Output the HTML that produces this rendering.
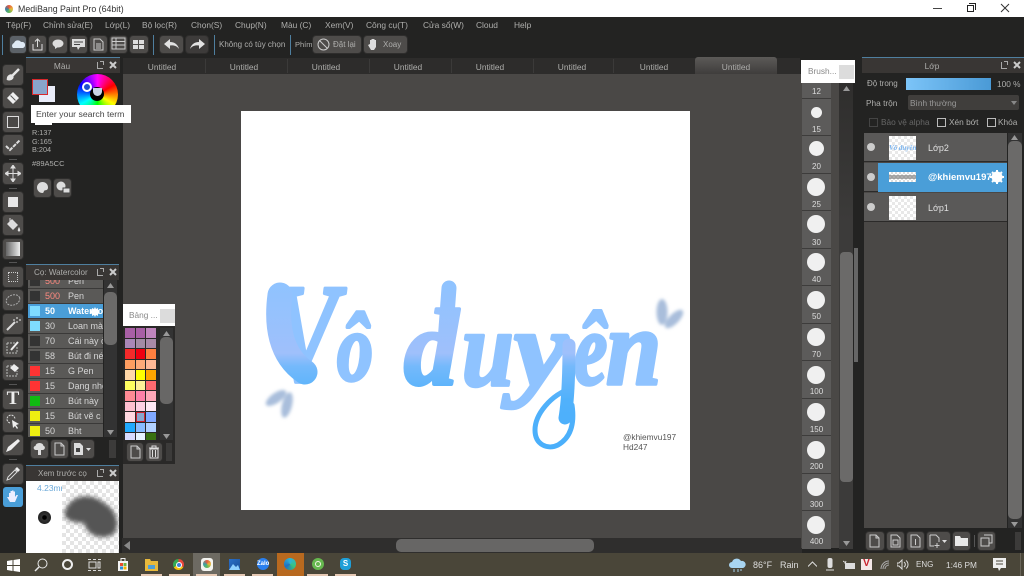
<!DOCTYPE html>
<html><head><meta charset="utf-8"><style>
*{box-sizing:border-box}
html,body{margin:0;padding:0;width:1024px;height:576px;overflow:hidden;background:#232322;font-family:"Liberation Sans","Noto Sans CJK SC",sans-serif}
#r{position:relative;width:1024px;height:576px;overflow:hidden}
#r div,#r span.a,#r svg{position:absolute}
.t{position:absolute;white-space:nowrap;color:#aeaeac;font-size:8.300px;line-height:12px}
.m{top:19px;font-size:8.400px}
.u{top:61px;width:80px;text-align:center;font-size:8.400px}
.b{background:#4e4c4a;border-radius:3px;box-shadow:0 0 0 1px #2e2d2c}
.h{background:#393634;border-top:1px solid #4f7f9f}
.sw{width:9.500px;height:9.500px}
.row{left:28px;width:75px;height:15px;background:#5a5957;border-bottom:1px solid #3a3938}
.chip{left:2px;top:2px;width:10px;height:10px;background:#3a3938}
.n{color:#d5d5d5;font-size:9px}
.c{border-radius:50%;background:#f0f0f0}
.l{color:#ddd;font-size:8px;left:0;width:29px;text-align:center}
</style></head><body><div id="r">
<!-- title bar -->
<div style="left:0;top:0;width:1024px;height:17px;background:#fff"></div>
<div style="left:5px;top:5px;width:8px;height:8px;border-radius:50%;background:conic-gradient(#e8583c,#e8b93c,#5cb85c,#3c7ea8,#e8583c)"></div>
<span class="t" style="left:18px;top:3px;color:#333;font-size:8.800px">MediBang Paint Pro (64bit)</span>
<div style="left:933px;top:8px;width:9px;height:1px;background:#444"></div>
<div style="left:967px;top:5px;width:7px;height:7px;border:1px solid #222;background:#fff"></div>
<div style="left:969px;top:3px;width:7px;height:7px;border:1px solid #222;border-left:0;border-bottom:0"></div>
<svg style="left:1000px;top:3px" width="10" height="10"><path d="M1 1L9 9M9 1L1 9" stroke="#333" fill="none"/></svg>
<!-- menu -->
<span class="t m" style="left:6px">Tệp(F)</span>
<span class="t m" style="left:43px">Chỉnh sửa(E)</span>
<span class="t m" style="left:105px">Lớp(L)</span>
<span class="t m" style="left:142px">Bộ lọc(R)</span>
<span class="t m" style="left:191px">Chọn(S)</span>
<span class="t m" style="left:235px">Chụp(N)</span>
<span class="t m" style="left:281px">Màu (C)</span>
<span class="t m" style="left:325px">Xem(V)</span>
<span class="t m" style="left:366px">Công cụ(T)</span>
<span class="t m" style="left:423px">Cửa sổ(W)</span>
<span class="t m" style="left:476px">Cloud</span>
<span class="t m" style="left:514px">Help</span>
<!-- toolbar -->
<div style="left:2px;top:35px;width:1px;height:20px;background:#4f7f9f"></div>
<div class="b" style="left:10px;top:36px;width:16px;height:17px;background:#5c6268"></div>
<svg style="left:11px;top:39px" width="14" height="11"><path d="M2 9a3 3 0 0 1 1-5a4 4 0 0 1 7-1a3 3 0 0 1 2 6z" fill="#dfeaf5"/></svg>
<div class="b" style="left:29px;top:36px;width:17px;height:17px"></div>
<svg style="left:31px;top:38px" width="13" height="13"><path d="M2 6v6h9V6M6.500 9V1M4 3.500L6.500 1L9 3.500" stroke="#ddd" fill="none"/></svg>
<div class="b" style="left:49px;top:36px;width:18px;height:17px"></div>
<svg style="left:52px;top:39px" width="12" height="11"><ellipse cx="6" cy="4.500" rx="5.500" ry="4" fill="#ddd"/><path d="M3 7L3 10L6 8z" fill="#ddd"/></svg>
<div class="b" style="left:70px;top:36px;width:17px;height:17px"></div>
<svg style="left:72px;top:39px" width="13" height="11"><path d="M0 0h13v8H8L6 11L5 8H0z" fill="#ddd"/><path d="M2 3h9M2 5.500h6" stroke="#444"/></svg>
<div class="b" style="left:90px;top:36px;width:17px;height:17px"></div>
<svg style="left:93px;top:38px" width="11" height="13"><path d="M1 1h6l3 3v8H1zM3 6h5M3 8h5M3 10h5" stroke="#ccc" fill="none"/></svg>
<div class="b" style="left:110px;top:36px;width:17px;height:17px"></div>
<svg style="left:111px;top:37px" width="15" height="15"><path d="M1 1h13v11H1zM1 4.500h13M1 8h13M5 1v11" stroke="#ccc" fill="none"/></svg>
<div class="b" style="left:130px;top:36px;width:18px;height:17px"></div>
<svg style="left:133px;top:39px" width="13" height="11"><path d="M0 1h5v4H0zM6 1h5v4H6zM0 6h5v4H0zM6 6h5v4H6z" fill="#ddd"/></svg>
<div style="left:153px;top:35px;width:1px;height:20px;background:#4f7f9f"></div>
<div class="b" style="left:160px;top:36px;width:23px;height:17px"></div>
<svg style="left:164px;top:39px" width="15" height="11"><path d="M0 5L6 0v3c5 0 8 3 9 7c-2-3-5-4-9-3.500V10z" fill="#e2e2e2"/></svg>
<div class="b" style="left:186px;top:36px;width:22px;height:17px;background:#3d3b3a"></div>
<svg style="left:190px;top:39px" width="15" height="11"><path d="M15 5L9 0v3C4 3 1 6 0 10c2-3 5-4 9-3.500V10z" fill="#e2e2e2"/></svg>
<div style="left:214px;top:35px;width:1px;height:20px;background:#4f7f9f"></div>
<span class="t" style="left:219px;top:39px;font-size:8px">Không có tùy chọn</span>
<div style="left:290px;top:35px;width:1px;height:20px;background:#4f7f9f"></div>
<span class="t" style="left:295px;top:39px;font-size:7.500px">Phím</span>
<div class="b" style="left:313px;top:36px;width:48px;height:17px"></div>
<svg style="left:317px;top:38px" width="13" height="13"><circle cx="6.500" cy="6.500" r="5.500" stroke="#ccc" fill="none"/><path d="M2.500 2.500l8 8" stroke="#ccc"/></svg>
<span class="t" style="left:333px;top:39px;font-size:8px">Đặt lại</span>
<div class="b" style="left:364px;top:36px;width:43px;height:17px"></div>
<svg style="left:367px;top:37px" width="13" height="15"><path d="M3 7V3h1.500v3V2H6v4V2h1.500v4V3H9v7l-2 3H4L1 8z" fill="#ddd"/></svg>
<span class="t" style="left:383px;top:39px;font-size:8px">Xoay</span>

<!-- tabs -->
<div style="left:123px;top:58px;width:677px;height:16px;background:#2d2c2b"></div>
<div style="left:205px;top:59px;width:1px;height:14px;background:#3b3a39"></div>
<div style="left:287px;top:59px;width:1px;height:14px;background:#3b3a39"></div>
<div style="left:369px;top:59px;width:1px;height:14px;background:#3b3a39"></div>
<div style="left:451px;top:59px;width:1px;height:14px;background:#3b3a39"></div>
<div style="left:533px;top:59px;width:1px;height:14px;background:#3b3a39"></div>
<div style="left:613px;top:59px;width:1px;height:14px;background:#3b3a39"></div>
<div style="left:695px;top:57px;width:82px;height:17px;background:linear-gradient(#5c5a58,#3f3d3c);border-radius:3px 3px 0 0"></div>
<span class="t u" style="left:122px">Untitled</span>
<span class="t u" style="left:204px">Untitled</span>
<span class="t u" style="left:286px">Untitled</span>
<span class="t u" style="left:368px">Untitled</span>
<span class="t u" style="left:450px">Untitled</span>
<span class="t u" style="left:532px">Untitled</span>
<span class="t u" style="left:614px">Untitled</span>
<span class="t u" style="left:696px">Untitled</span>

<!-- canvas -->
<div style="left:123px;top:74px;width:678px;height:464px;background:#4a4846"></div>
<div style="left:241px;top:111px;width:449px;height:399px;background:#fff"></div>
<svg style="left:0;top:0" width="1024" height="576">
<defs>
<linearGradient id="g" gradientUnits="userSpaceOnUse" x1="0" y1="283" x2="0" y2="450">
<stop offset="0" stop-color="#8fc3ff"/><stop offset=".42" stop-color="#9fc0fb"/><stop offset=".5" stop-color="#74b9fb"/><stop offset=".7" stop-color="#50b1fb"/><stop offset="1" stop-color="#4aaffb"/>
</linearGradient>
<filter id="bl"><feGaussianBlur stdDeviation="1.500"/></filter>
</defs>
<g fill="url(#g)" stroke="url(#g)" stroke-width="3.500" stroke-linejoin="round" font-family="'Liberation Serif',serif" font-style="italic" font-weight="700">
<text transform="translate(268 380) scale(.76 1)" font-size="140">V</text>
<text transform="translate(337 380) scale(.75 1)" font-size="96">ô</text>
<text x="404" y="384" font-size="108">d</text>
<text transform="translate(462 385) scale(.86 1)" font-size="108">u</text>
<text transform="translate(514 385) scale(1.12 1)" font-size="108">y</text>
<text transform="translate(574 384) scale(.72 1)" font-size="104">ê</text>
<text transform="translate(606 384) scale(.92 1)" font-size="108">n</text>
</g>
<!-- brush flourishes of the painted artwork -->
<g fill="none" stroke="url(#g)" stroke-linecap="round">
<path d="M449 288L445 342" stroke-width="15"/>
<path d="M569 345C569 375 568 400 565 418" stroke-width="13"/>
<path d="M572 388C550 395 535 415 535 430C535 445 548 450 558 445C570 438 575 425 572 405" stroke-width="5"/>
<path d="M280 295C276 325 280 355 305 372" stroke-width="25"/>
</g>
<g filter="url(#bl)" fill="#a9bedb">
<ellipse cx="662" cy="312" rx="5.500" ry="13"/>
<ellipse cx="674" cy="319" rx="5" ry="12" transform="rotate(45 674 319)"/>
<ellipse cx="276" cy="398" rx="5" ry="12" transform="rotate(55 276 398)"/>
<ellipse cx="287" cy="405" rx="5" ry="13" transform="rotate(14 287 405)"/>
</g>
</svg>
<span class="t" style="left:623px;top:431px;color:#555">@khiemvu197</span>
<span class="t" style="left:623px;top:441px;color:#555">Hd247</span>
<!-- h scrollbar -->
<div style="left:122px;top:538px;width:680px;height:15px;background:#2f2e2d"></div>
<div style="left:396px;top:539px;width:198px;height:13px;background:#676665;border-radius:5px"></div>
<svg style="left:124px;top:541px" width="8" height="9"><path d="M6 0v9L0 4.500z" fill="#888"/></svg>

<!-- left tools -->
<div style="left:0;top:57px;width:26px;height:496px;background:#232322"></div>
<div class="b" style="left:3px;top:65px;width:20px;height:20px"></div>
<svg style="left:5px;top:67px" width="16" height="16"><path d="M14 2L7 9M3 12c0-3 3-4 4-3s0 4-4 3z" stroke="#e5e5e5" stroke-width="2.500" fill="#e5e5e5"/></svg>
<div class="b" style="left:3px;top:88px;width:20px;height:20px"></div>
<svg style="left:5px;top:90px" width="16" height="16"><path d="M8 2l6 6l-6 6l-6-6z" fill="#eee"/><path d="M5.500 5.500l5 5" stroke="#555"/></svg>
<div class="b" style="left:3px;top:112px;width:20px;height:20px"></div>
<div style="left:7px;top:116px;width:12px;height:12px;border:1.500px solid #ddd;background:#4a4846"></div>
<div class="b" style="left:3px;top:135px;width:20px;height:20px"></div>
<svg style="left:5px;top:137px" width="16" height="16"><path d="M1 9l4 4L15 3" stroke="#ddd" stroke-width="2" fill="none" stroke-dasharray="4 1"/></svg>
<div style="left:9px;top:159px;width:8px;height:1px;background:#555"></div>
<div class="b" style="left:3px;top:163px;width:20px;height:21px"></div>
<svg style="left:5px;top:165px" width="16" height="17"><path d="M8 1v15M1 8.500h14M8 0l-2 3h4zM8 17l-2-3h4zM0 8.500l3-2v4zM16 8.500l-3-2v4z" stroke="#ddd" fill="#ddd"/></svg>
<div style="left:9px;top:188px;width:8px;height:1px;background:#555"></div>
<div class="b" style="left:3px;top:192px;width:20px;height:20px"></div>
<div style="left:8px;top:197px;width:10px;height:10px;background:#e8e8e8"></div>
<div class="b" style="left:3px;top:215px;width:20px;height:20px"></div>
<svg style="left:5px;top:217px" width="16" height="16"><path d="M7 2l6 6l-5 5l-6-6z" fill="#ddd"/><path d="M5 1v6M14 11c1 2 1 3 0 3s-1-1 0-3z" stroke="#ddd" fill="#ddd"/></svg>
<div class="b" style="left:3px;top:239px;width:20px;height:20px"></div>
<div style="left:6px;top:242px;width:14px;height:14px;background:linear-gradient(90deg,#666,#eee)"></div>
<div style="left:9px;top:262px;width:8px;height:1px;background:#555"></div>
<div class="b" style="left:3px;top:267px;width:20px;height:20px"></div>
<div style="left:8px;top:272px;width:10px;height:10px;border:1px dotted #ccc"></div>
<div class="b" style="left:3px;top:290px;width:20px;height:20px"></div>
<svg style="left:5px;top:293px" width="16" height="14"><ellipse cx="8" cy="7" rx="7" ry="5" stroke="#aaa" fill="none" stroke-dasharray="2 1" transform="rotate(-20 8 7)"/></svg>
<div class="b" style="left:3px;top:314px;width:20px;height:20px"></div>
<svg style="left:5px;top:316px" width="16" height="16"><path d="M2 14l8-8" stroke="#ddd" stroke-width="2"/><path d="M12 1v2M12 5v2M8 4h2M14 4h2" stroke="#eee"/></svg>
<div class="b" style="left:3px;top:337px;width:20px;height:20px"></div>
<svg style="left:5px;top:339px" width="16" height="16"><path d="M2 4h9M2 4v10h10V8" stroke="#bbb" fill="none" stroke-dasharray="2 1"/><path d="M6 11l7-8" stroke="#eee" stroke-width="2"/></svg>
<div class="b" style="left:3px;top:360px;width:20px;height:20px"></div>
<svg style="left:5px;top:362px" width="16" height="16"><path d="M2 4h6M2 4v10h10V9" stroke="#bbb" fill="none" stroke-dasharray="2 1"/><path d="M9 2l5 4l-4 4l-5-4z" fill="#eee"/></svg>
<div style="left:9px;top:384px;width:8px;height:1px;background:#555"></div>
<div class="b" style="left:3px;top:389px;width:20px;height:20px"></div>
<span class="t" style="left:3px;top:389px;width:20px;height:20px;text-align:center;font:700 19px/20px 'Liberation Serif',serif;color:#eee">T</span>
<div class="b" style="left:3px;top:412px;width:20px;height:20px"></div>
<svg style="left:5px;top:414px" width="16" height="16"><path d="M5 9a4 4 0 1 1 5-4" stroke="#ddd" fill="none" stroke-dasharray="2 1"/><path d="M7 6l7 4l-3 1l2 3l-1 1l-2-3l-2 2z" fill="#eee"/></svg>
<div class="b" style="left:3px;top:435px;width:20px;height:20px"></div>
<svg style="left:5px;top:437px" width="16" height="16"><path d="M13 2l2 2l-9 9l-5 2l2-5z" fill="#eee"/></svg>
<div style="left:9px;top:459px;width:8px;height:1px;background:#555"></div>
<div class="b" style="left:3px;top:464px;width:20px;height:20px"></div>
<svg style="left:5px;top:466px" width="16" height="16"><path d="M2 14l1-3l7-7l2 2l-7 7z" stroke="#ddd" fill="none"/><path d="M10 3l2-2l3 3l-2 2z" fill="#eee"/></svg>
<div class="b" style="left:3px;top:487px;width:20px;height:20px;background:#4a9ed8;box-shadow:none"></div>
<svg style="left:5px;top:489px" width="16" height="16"><path d="M4 8V4h1.500v3V2H7v5V1.500h1.500V7V2.500H10V8l1.500-2h1.500l-3 7H5L2 8z" fill="#eef"/></svg>

<!-- colour panel -->
<div style="left:26px;top:57px;width:94px;height:208px;background:#232322"></div>
<div class="h" style="left:26px;top:57px;width:94px;height:16px"></div>
<span class="t" style="left:26px;top:60px;width:72px;text-align:center">Màu</span>
<div style="left:97px;top:62px;width:6px;height:7px;border:1px solid #aaa;border-top:0;border-right:0"></div>
<div style="left:100px;top:61px;width:4px;height:4px;border:1px solid #aaa;border-left:0;border-bottom:0"></div>
<svg style="left:109px;top:61px" width="8" height="8"><path d="M1 1l6 6M7 1L1 7" stroke="#ccc" stroke-width="2"/></svg>
<div style="left:39px;top:86px;width:16px;height:16px;background:#e9ecf9"></div>
<div style="left:32px;top:79px;width:16px;height:16px;background:#89A5CC;border:1.500px solid #d8282c"></div>
<div style="left:77px;top:74px;width:41px;height:41px;border-radius:50%;background:conic-gradient(#f0f,#f00,#ff0,#0f0,#0ff,#00f,#f0f)"></div>
<div style="left:90px;top:87px;width:14px;height:14px;border-radius:50%;background:#000"></div>
<div style="left:93px;top:88px;width:9px;height:8px;border-radius:0 0 5px 5px;background:#c8d4e6"></div>
<div style="left:82px;top:82px;width:10px;height:10px;border-radius:50%;background:#2050d0;border:2px solid #fff"></div>
<div style="left:35px;top:120px;width:17px;height:5px;background:#fff"></div>
<div style="left:31px;top:105px;width:100px;height:18px;background:#fff"></div>
<span class="t" style="left:36px;top:108px;color:#444;font-size:8.700px">Enter your search term</span>
<span class="t" style="left:32px;top:129px;font-size:7.300px;line-height:8.500px">R:137<br>G:165<br>B:204</span>
<span class="t" style="left:32px;top:158px;font-size:7.500px">#89A5CC</span>
<div class="b" style="left:34px;top:179px;width:17px;height:18px"></div>
<svg style="left:36px;top:181px" width="13" height="13"><path d="M6.500 1a5.500 5.500 0 1 0 0 11c1.500 0 1-2 2-2.500s3.500 0 3.500-3C12 3 9.500 1 6.500 1z" fill="#ddd"/></svg>
<div class="b" style="left:54px;top:179px;width:17px;height:18px"></div>
<svg style="left:56px;top:181px" width="14" height="13"><circle cx="5" cy="5" r="4.500" fill="#ddd"/><rect x="7" y="7" width="7" height="5" fill="#ddd" stroke="#444"/></svg>

<!-- brush panel -->
<div style="left:26px;top:264px;width:94px;height:199px;background:#232322"></div>
<div class="h" style="left:26px;top:264px;width:93px;height:16px"></div>
<span class="t" style="left:34px;top:267px;font-size:8.100px">Cọ: Watercolor</span>
<div style="left:97px;top:269px;width:6px;height:7px;border:1px solid #aaa;border-top:0;border-right:0"></div>
<div style="left:100px;top:268px;width:4px;height:4px;border:1px solid #aaa;border-left:0;border-bottom:0"></div>
<svg style="left:109px;top:268px" width="8" height="8"><path d="M1 1l6 6M7 1L1 7" stroke="#ccc" stroke-width="2"/></svg>
<div style="left:28px;top:280px;width:75px;height:157px;overflow:hidden;background:#5a5957">
<div class="row" style="left:0;top:-6px"><div class="chip" style="background:#333;left:2px"></div><span class="t n" style="left:17px;top:1px;color:#ff8a80">500</span><span class="t n" style="left:40px;top:1px">Pen</span></div>
<div class="row" style="left:0;top:9px"><div class="chip" style="background:#333"></div><span class="t n" style="left:17px;top:1px;color:#ff8a80">500</span><span class="t n" style="left:40px;top:1px">Pen</span></div>
<div class="row" style="left:0;top:24px;background:#4a9ed8"><div class="chip" style="background:#7fdcff"></div><span class="t n" style="left:17px;top:1px;color:#fff;font-weight:700">50</span><span class="t n" style="left:40px;top:1px;color:#fff;font-weight:700">Watercolor</span></div>
<div class="row" style="left:0;top:39px"><div class="chip" style="background:#7fdcff"></div><span class="t n" style="left:17px;top:1px">30</span><span class="t n" style="left:40px;top:1px">Loan màu</span></div>
<div class="row" style="left:0;top:54px"><div class="chip" style="background:#333"></div><span class="t n" style="left:17px;top:1px">70</span><span class="t n" style="left:40px;top:1px">Cái này ở</span></div>
<div class="row" style="left:0;top:69px"><div class="chip" style="background:#333"></div><span class="t n" style="left:17px;top:1px">58</span><span class="t n" style="left:40px;top:1px">Bút đi nét</span></div>
<div class="row" style="left:0;top:84px"><div class="chip" style="background:#f33"></div><span class="t n" style="left:17px;top:1px">15</span><span class="t n" style="left:40px;top:1px">G Pen</span></div>
<div class="row" style="left:0;top:99px"><div class="chip" style="background:#f33"></div><span class="t n" style="left:17px;top:1px">15</span><span class="t n" style="left:40px;top:1px">Dạng nhỏ</span></div>
<div class="row" style="left:0;top:114px"><div class="chip" style="background:#1b1"></div><span class="t n" style="left:17px;top:1px">10</span><span class="t n" style="left:40px;top:1px">Bút này</span></div>
<div class="row" style="left:0;top:129px"><div class="chip" style="background:#ee1"></div><span class="t n" style="left:17px;top:1px">15</span><span class="t n" style="left:40px;top:1px">Bút vẽ c</span></div>
<div class="row" style="left:0;top:144px"><div class="chip" style="background:#ee1"></div><span class="t n" style="left:17px;top:1px">50</span><span class="t n" style="left:40px;top:1px">Bht</span></div>
</div>
<svg style="left:90px;top:307px" width="10" height="10"><path d="M5 0l1 2l2-1l0 2l2 1l-1 1l1 1l-2 1l0 2l-2-1l-1 2l-1-2l-2 1l0-2l-2-1l1-1l-1-1l2-1l0-2l2 1z" fill="#fff"/></svg>
<div style="left:104px;top:280px;width:13px;height:157px;background:#333"></div>
<div style="left:104px;top:292px;width:13px;height:53px;background:#6b6a69;border-radius:5px"></div>
<svg style="left:107px;top:283px" width="7" height="5"><path d="M3.500 0L7 5H0z" fill="#999"/></svg>
<svg style="left:107px;top:430px" width="7" height="5"><path d="M3.500 5L7 0H0z" fill="#999"/></svg>
<div class="b" style="left:31px;top:440px;width:17px;height:18px"></div>
<svg style="left:33px;top:442px" width="13" height="14"><path d="M6.500 1c3 0 4 2 4 3c2 0 2 4-1 4H8v5H5V8H3C0 8 0 4 2.500 4c0-1 1-3 4-3z" fill="#ddd"/></svg>
<div class="b" style="left:51px;top:440px;width:17px;height:18px"></div>
<svg style="left:54px;top:442px" width="11" height="14"><path d="M1 1h6l3 3v9H1zM7 1v3h3" stroke="#ccc" fill="none"/></svg>
<div class="b" style="left:71px;top:440px;width:23px;height:18px"></div>
<svg style="left:73px;top:442px" width="19" height="14"><path d="M1 1h6l3 3v9H1z" fill="#ddd"/><rect x="3" y="6" width="4" height="4" fill="#444"/><path d="M13 6h5l-2.500 3z" fill="#ddd"/></svg>
<div style="left:109px;top:440px;width:7px;height:18px;background:#3c3b3a"></div>

<!-- preview panel -->
<div class="h" style="left:26px;top:465px;width:93px;height:16px"></div>
<span class="t" style="left:38px;top:468px;font-size:8px">Xem trước cọ</span>
<div style="left:97px;top:470px;width:6px;height:7px;border:1px solid #aaa;border-top:0;border-right:0"></div>
<div style="left:100px;top:469px;width:4px;height:4px;border:1px solid #aaa;border-left:0;border-bottom:0"></div>
<svg style="left:109px;top:469px" width="8" height="8"><path d="M1 1l6 6M7 1L1 7" stroke="#ccc" stroke-width="2"/></svg>
<div style="left:26px;top:481px;width:93px;height:72px;background:#fff"></div>
<div style="left:62px;top:481px;width:57px;height:72px;background:repeating-conic-gradient(#e4e4e4 0 25%,#fff 0 50%) 0 0/8px 8px"></div>
<span class="t" style="left:37px;top:482px;color:#6aa8d8;font-size:8.500px;width:25px;overflow:hidden">4.23mm</span>
<div style="left:38px;top:511px;width:13px;height:13px;border-radius:50%;background:radial-gradient(#000 20%,#333 30%,#222 70%,#666)"></div>
<svg style="left:62px;top:481px" width="57" height="72"><defs><filter id="b2"><feGaussianBlur stdDeviation="2.500"/></filter></defs><path d="M3 30C10 12 30 12 42 22C56 30 58 45 52 53C40 60 25 55 22 42C10 42 0 38 3 30z" fill="#555" filter="url(#b2)"/></svg>

<!-- palette panel -->
<div style="left:123px;top:304px;width:52px;height:160px;background:#2a2928"></div>
<div style="left:123px;top:304px;width:52px;height:22px;background:#fff"></div>
<span class="t" style="left:129px;top:309px;color:#888">Bảng ...</span>
<div style="left:160px;top:309px;width:15px;height:14px;background:#dcdcdc"></div>
<div class="sw" style="left:125px;top:328px;background:#a85fa5"></div><div class="sw" style="left:135.500px;top:328px;background:#a85fa5"></div><div class="sw" style="left:146px;top:328px;background:#c085bd"></div>
<div class="sw" style="left:125px;top:338.500px;background:#a987b8"></div><div class="sw" style="left:135.500px;top:338.500px;background:#a38ba5"></div><div class="sw" style="left:146px;top:338.500px;background:#a98aa8"></div>
<div class="sw" style="left:125px;top:349px;background:#f52a2a"></div><div class="sw" style="left:135.500px;top:349px;background:#f00010"></div><div class="sw" style="left:146px;top:349px;background:#ff8040"></div>
<div class="sw" style="left:125px;top:359.500px;background:#ff9e60"></div><div class="sw" style="left:135.500px;top:359.500px;background:#ffaa78"></div><div class="sw" style="left:146px;top:359.500px;background:#ffb896"></div>
<div class="sw" style="left:125px;top:370px;background:#ffd8a8"></div><div class="sw" style="left:135.500px;top:370px;background:#ffff00"></div><div class="sw" style="left:146px;top:370px;background:#ffa500"></div>
<div class="sw" style="left:125px;top:380.500px;background:#ffff60"></div><div class="sw" style="left:135.500px;top:380.500px;background:#fff098"></div><div class="sw" style="left:146px;top:380.500px;background:#ff6a70"></div>
<div class="sw" style="left:125px;top:391px;background:#ff8a94"></div><div class="sw" style="left:135.500px;top:391px;background:#ff80a8"></div><div class="sw" style="left:146px;top:391px;background:#ffa8b8"></div>
<div class="sw" style="left:125px;top:401.500px;background:#ffc0d0"></div><div class="sw" style="left:135.500px;top:401.500px;background:#ffd0e4"></div><div class="sw" style="left:146px;top:401.500px;background:#ffe8f4"></div>
<div class="sw" style="left:125px;top:412px;background:#ffd8e0"></div><div class="sw" style="left:135.500px;top:412px;background:#89A5CC;border:1px solid #d02030"></div><div class="sw" style="left:146px;top:412px;background:#80a8ff"></div>
<div class="sw" style="left:125px;top:422.500px;background:#20aaff"></div><div class="sw" style="left:135.500px;top:422.500px;background:#88bcff"></div><div class="sw" style="left:146px;top:422.500px;background:#b0d0ff"></div>
<div class="sw" style="left:125px;top:433px;background:#d8dcff;height:7px"></div><div class="sw" style="left:135.500px;top:433px;background:#e8f4ff;height:7px"></div><div class="sw" style="left:146px;top:433px;background:#387010;height:7px"></div>
<div style="left:160px;top:328px;width:13px;height:112px;background:#333"></div>
<div style="left:160px;top:337px;width:13px;height:67px;background:#686766;border-radius:5px"></div>
<svg style="left:163px;top:331px" width="7" height="5"><path d="M3.500 0L7 5H0z" fill="#999"/></svg>
<svg style="left:163px;top:434px" width="7" height="5"><path d="M3.500 5L7 0H0z" fill="#999"/></svg>
<div class="b" style="left:127px;top:443px;width:16px;height:18px"></div>
<svg style="left:130px;top:445px" width="11" height="14"><path d="M1 1h6l3 3v9H1zM7 1v3h3" stroke="#ccc" fill="none"/></svg>
<div class="b" style="left:146px;top:443px;width:16px;height:18px"></div>
<svg style="left:148px;top:445px" width="12" height="14"><path d="M1 3h10M4 3V1h4v2M2 4h8v9H2zM4.500 5v7M7.500 5v7" stroke="#ddd" fill="none"/></svg>
<div style="left:166px;top:443px;width:6px;height:18px;background:#3c3b3a"></div>

<!-- brush size panel -->
<div style="left:801px;top:74px;width:38px;height:474px;background:#4a4846"></div>
<div style="left:801px;top:60px;width:54px;height:23px;background:#fff"></div>
<span class="t" style="left:808px;top:65px;color:#888">Brush...</span>
<div style="left:839px;top:65px;width:15px;height:14px;background:#dcdcdc"></div>
<div style="left:802px;top:83px;width:29px;height:466px;background:#5c5b5a"></div>
<div style="left:839px;top:83px;width:14px;height:466px;background:linear-gradient(#2f2e2d,#3c3b3a 30%,#3c3b3a)"></div>
<div style="left:840px;top:252px;width:13px;height:230px;background:#6b6a69;border-radius:4px"></div>
<div style="left:854px;top:248px;width:4px;height:114px;background:#666"></div>
<svg style="left:843px;top:86px" width="7" height="5"><path d="M3.500 0L7 5H0z" fill="#999"/></svg>
<svg style="left:843px;top:541px" width="7" height="5"><path d="M3.500 5L7 0H0z" fill="#999"/></svg>
<div style="left:802px;top:98px;width:29px;height:1px;background:#3d3c3b"></div>
<span class="t l" style="left:802px;top:86px">12</span>
<div class="c" style="left:811px;top:107px;width:11px;height:11px"></div><span class="t l" style="left:802px;top:124px">15</span>
<div style="left:802px;top:135px;width:29px;height:1px;background:#3d3c3b"></div>
<div class="c" style="left:809px;top:141px;width:15px;height:15px"></div><span class="t l" style="left:802px;top:161px">20</span>
<div style="left:802px;top:173px;width:29px;height:1px;background:#3d3c3b"></div>
<div class="c" style="left:807px;top:178px;width:18px;height:18px"></div><span class="t l" style="left:802px;top:199px">25</span>
<div style="left:802px;top:210px;width:29px;height:1px;background:#3d3c3b"></div>
<div class="c" style="left:807px;top:215px;width:18px;height:18px"></div><span class="t l" style="left:802px;top:237px">30</span>
<div style="left:802px;top:248px;width:29px;height:1px;background:#3d3c3b"></div>
<div class="c" style="left:807px;top:253px;width:18px;height:18px"></div><span class="t l" style="left:802px;top:274px">40</span>
<div style="left:802px;top:285px;width:29px;height:1px;background:#3d3c3b"></div>
<div class="c" style="left:807px;top:291px;width:18px;height:18px"></div><span class="t l" style="left:802px;top:311px">50</span>
<div style="left:802px;top:323px;width:29px;height:1px;background:#3d3c3b"></div>
<div class="c" style="left:807px;top:328px;width:18px;height:18px"></div><span class="t l" style="left:802px;top:349px">70</span>
<div style="left:802px;top:360px;width:29px;height:1px;background:#3d3c3b"></div>
<div class="c" style="left:807px;top:366px;width:18px;height:18px"></div><span class="t l" style="left:802px;top:386px">100</span>
<div style="left:802px;top:398px;width:29px;height:1px;background:#3d3c3b"></div>
<div class="c" style="left:807px;top:403px;width:18px;height:18px"></div><span class="t l" style="left:802px;top:424px">150</span>
<div style="left:802px;top:435px;width:29px;height:1px;background:#3d3c3b"></div>
<div class="c" style="left:807px;top:441px;width:18px;height:18px"></div><span class="t l" style="left:802px;top:461px">200</span>
<div style="left:802px;top:473px;width:29px;height:1px;background:#3d3c3b"></div>
<div class="c" style="left:807px;top:478px;width:18px;height:18px"></div><span class="t l" style="left:802px;top:499px">300</span>
<div style="left:802px;top:510px;width:29px;height:1px;background:#3d3c3b"></div>
<div class="c" style="left:807px;top:516px;width:18px;height:18px"></div><span class="t l" style="left:802px;top:536px">400</span>

<!-- layer panel -->
<div style="left:862px;top:57px;width:162px;height:496px;background:#232322"></div>
<div class="h" style="left:862px;top:57px;width:162px;height:16px"></div>
<span class="t" style="left:862px;top:60px;width:140px;text-align:center">Lớp</span>
<div style="left:1001px;top:62px;width:6px;height:7px;border:1px solid #aaa;border-top:0;border-right:0"></div>
<div style="left:1004px;top:61px;width:4px;height:4px;border:1px solid #aaa;border-left:0;border-bottom:0"></div>
<svg style="left:1013px;top:61px" width="8" height="8"><path d="M1 1l6 6M7 1L1 7" stroke="#ccc" stroke-width="2"/></svg>
<span class="t" style="left:867px;top:78px;font-size:8px">Độ trong</span>
<div style="left:906px;top:78px;width:85px;height:12px;background:linear-gradient(90deg,#7cc4f8,#4a9ad6)"></div>
<span class="t" style="left:997px;top:78px">100 %</span>
<span class="t" style="left:866px;top:97px">Pha trộn</span>
<div style="left:908px;top:95px;width:111px;height:15px;background:#403e3c;border-radius:2px"></div>
<span class="t" style="left:910px;top:97px;color:#999">Bình thường</span>
<svg style="left:1011px;top:101px" width="6" height="4"><path d="M0 0h6L3 4z" fill="#888"/></svg>
<div style="left:869px;top:118px;width:9px;height:9px;border:1px solid #444"></div>
<span class="t" style="left:881px;top:116px;color:#666">Bảo vệ alpha</span>
<div style="left:937px;top:118px;width:9px;height:9px;border:1px solid #bbb"></div>
<span class="t" style="left:949px;top:116px">Xén bớt</span>
<div style="left:987px;top:118px;width:9px;height:9px;border:1px solid #bbb"></div>
<span class="t" style="left:998px;top:116px">Khóa</span>
<div style="left:864px;top:133px;width:143px;height:395px;background:#4a4846"></div>
<div style="left:864px;top:133px;width:143px;height:29px;background:#5a5958;border-bottom:1px solid #2b2a29"></div>
<div style="left:864px;top:163px;width:143px;height:29px;background:#5a5958;border-bottom:1px solid #2b2a29"></div>
<div style="left:878px;top:163px;width:129px;height:29px;background:#4a9ed8"></div>
<div style="left:864px;top:193px;width:143px;height:29px;background:#5a5958;border-bottom:1px solid #2b2a29"></div>
<div class="c" style="left:867px;top:143px;width:8px;height:8px;background:#ccc"></div>
<div class="c" style="left:867px;top:173px;width:8px;height:8px;background:#ccc"></div>
<div class="c" style="left:867px;top:203px;width:8px;height:8px;background:#ccc"></div>
<div style="left:889px;top:136px;width:27px;height:24px;background:repeating-conic-gradient(#e8e8e8 0 25%,#fff 0 50%) 0 0/6px 6px"></div>
<span class="t" style="left:889px;top:142px;width:27px;text-align:center;color:#7ab4f0;font:italic 700 7px/12px 'Liberation Serif',serif">Vô duyên</span>
<div style="left:889px;top:172px;width:27px;height:10px;background:repeating-conic-gradient(#ddd 0 25%,#fff 0 50%) 0 0/4px 4px"></div>
<div style="left:889px;top:175px;width:27px;height:4px;background:#777;opacity:.6"></div>
<div style="left:889px;top:196px;width:27px;height:24px;background:repeating-conic-gradient(#e8e8e8 0 25%,#fff 0 50%) 0 0/6px 6px"></div>
<span class="t" style="left:928px;top:142px;color:#e0e0e0;font-size:9px">Lớp2</span>
<span class="t" style="left:928px;top:172px;color:#fff;font-size:9.500px;font-weight:700;width:70px;overflow:hidden">@khiemvu197</span>
<span class="t" style="left:928px;top:202px;color:#e0e0e0;font-size:9px">Lớp1</span>
<svg style="left:990px;top:170px" width="14" height="14"><circle cx="7" cy="7" r="4" fill="none" stroke="#fff" stroke-width="3"/><path d="M7 0v14M0 7h14M2 2l10 10M12 2L2 12" stroke="#fff" stroke-width="2"/></svg>
<div style="left:1008px;top:133px;width:14px;height:395px;background:#333"></div>
<div style="left:1008px;top:141px;width:14px;height:378px;background:#6b6a69;border-radius:5px"></div>
<svg style="left:1011px;top:135px" width="7" height="5"><path d="M3.500 0L7 5H0z" fill="#999"/></svg>
<svg style="left:1011px;top:522px" width="7" height="5"><path d="M3.500 5L7 0H0z" fill="#999"/></svg>
<div class="b" style="left:866px;top:532px;width:18px;height:18px"></div>
<svg style="left:869px;top:534px" width="11" height="14"><path d="M1 1h6l3 3v9H1zM7 1v3h3" stroke="#ccc" fill="none"/></svg>
<div class="b" style="left:887px;top:532px;width:17px;height:18px"></div>
<svg style="left:889px;top:534px" width="12" height="14"><path d="M2 1h6l3 3v9H2zM4 6h5v5H4z" stroke="#ccc" fill="none"/></svg>
<div class="b" style="left:907px;top:532px;width:17px;height:18px"></div>
<svg style="left:909px;top:534px" width="12" height="14"><path d="M2 1h6l3 3v9H2zM6.500 5v6" stroke="#ccc" fill="none"/></svg>
<div class="b" style="left:927px;top:532px;width:23px;height:18px"></div>
<svg style="left:929px;top:534px" width="20" height="14"><path d="M1 1h6l3 3v4M1 1v11h4M8 9v5M5.500 11.500h5" stroke="#ccc" fill="none"/><path d="M13 6h5l-2.500 3z" fill="#ddd"/></svg>
<div class="b" style="left:953px;top:532px;width:17px;height:18px"></div>
<svg style="left:955px;top:535px" width="13" height="11"><path d="M0 1h5l1 2h7v8H0z" fill="#e8e8e8"/></svg>
<div style="left:974px;top:535px;width:1px;height:12px;background:#555"></div>
<div class="b" style="left:978px;top:532px;width:17px;height:18px"></div>
<svg style="left:980px;top:534px" width="13" height="13"><path d="M4 1h8v8H9M1 4h8v8H1z" stroke="#ccc" fill="none"/></svg>
<div style="left:1015px;top:532px;width:6px;height:18px;background:#3c3b3a"></div>

<!-- taskbar -->
<div style="left:0;top:553px;width:1024px;height:23px;background:#4a4639"></div>
<div style="left:193px;top:553px;width:27px;height:23px;background:#6d6a62"></div>
<div style="left:277px;top:553px;width:27px;height:23px;background:#b8691f"></div>
<div style="left:141px;top:574px;width:21px;height:2px;background:#e6c9b4"></div>
<div style="left:169px;top:574px;width:21px;height:2px;background:#e6c9b4"></div>
<div style="left:196px;top:574px;width:21px;height:2px;background:#e6c9b4"></div>
<div style="left:224px;top:574px;width:21px;height:2px;background:#e6c9b4"></div>
<div style="left:252px;top:574px;width:21px;height:2px;background:#e6c9b4"></div>
<div style="left:307px;top:574px;width:21px;height:2px;background:#e6c9b4"></div>
<div style="left:335px;top:574px;width:21px;height:2px;background:#e6c9b4"></div>
<svg style="left:7px;top:559px" width="13" height="13"><path d="M0 2l5.500-1v5H0zM6.500 1L13 0v6H6.500zM0 7h5.500v5L0 11zM6.500 7H13v6l-6.500-1z" fill="#fff"/></svg>
<svg style="left:34px;top:558px" width="14" height="14"><circle cx="8.500" cy="5.500" r="4.500" stroke="#e8e8e8" fill="none"/><path d="M5 9L1 13" stroke="#e8e8e8" stroke-width="1.500"/></svg>
<div style="left:62px;top:559px;width:11px;height:11px;border:2px solid #eee;border-radius:50%"></div>
<svg style="left:88px;top:559px" width="13" height="12"><path d="M0 .5h3M5 .5h3M10 .5h3M0 11.500h3M5 11.500h3M10 11.500h3M1 3h7v6H1zM10 3h2v6h-2z" stroke="#ddd" fill="none"/></svg>
<svg style="left:117px;top:557px" width="12" height="15"><path d="M1 4h10v10H1z" fill="#f4f4f4"/><path d="M4 4V1.500h4V4" stroke="#eee" fill="none"/><rect x="3" y="6" width="3" height="3" fill="#e84c2c"/><rect x="6.500" y="6" width="3" height="3" fill="#6db33f"/><rect x="3" y="9.500" width="3" height="3" fill="#2a8fd8"/><rect x="6.500" y="9.500" width="3" height="3" fill="#f4b400"/></svg>
<svg style="left:145px;top:559px" width="13" height="12"><path d="M0 0h5l1 2h7v10H0z" fill="#e8b93c"/><rect x="3" y="6" width="7" height="4" fill="#4f9fd8"/></svg>
<div style="left:173px;top:559px;width:11px;height:11px;border-radius:50%;background:conic-gradient(#e8453c 0 33%,#f4c20d 0 66%,#34a853 0)"></div>
<div style="left:176.500px;top:562.500px;width:4px;height:4px;border-radius:50%;background:#3b82d8;box-shadow:0 0 0 1px #fff"></div>
<div style="left:201px;top:558px;width:12px;height:13px;border-radius:3px;background:#f4f4f0"></div>
<div style="left:203px;top:560px;width:8px;height:8px;border-radius:50%;background:conic-gradient(#e8583c,#e8b93c,#5cb85c,#3c9ea8,#e8583c)"></div>
<div style="left:229px;top:559px;width:11px;height:11px;background:linear-gradient(135deg,#2a6fc8,#1a4f98)"></div>
<svg style="left:229px;top:562px" width="11" height="8"><path d="M0 8l4-6l3 3l2-2l2 5z" fill="#8fd0ff"/></svg>
<div style="left:257px;top:558px;width:12px;height:12px;border-radius:50%;background:#2a80f0"></div>
<span class="t" style="left:257px;top:559px;width:12px;text-align:center;font-size:6px;line-height:10px;color:#fff;font-weight:700">Zalo</span>
<div style="left:284px;top:558px;width:12px;height:12px;border-radius:50%;background:conic-gradient(#2eb5d8,#3ac47d,#1d6fc0,#2eb5d8)"></div>
<div style="left:312px;top:558px;width:12px;height:12px;border-radius:50%;background:#66b84f"></div>
<div style="left:315px;top:561px;width:6px;height:6px;border-radius:50%;border:1.500px solid #f4f4e8"></div>
<div style="left:340px;top:558px;width:11px;height:12px;border-radius:4px;background:#1f9fd8"></div>
<span class="t" style="left:340px;top:558px;width:11px;text-align:center;font-size:8px;color:#fff;font-weight:700">S</span>
<svg style="left:729px;top:557px" width="17" height="16"><path d="M3 11a3 3 0 0 1 0-6a5 5 0 0 1 9-1a3.500 3.500 0 0 1 2 7z" fill="#a8d4f0"/><path d="M5 12v3M9 12v3M12 12v2" stroke="#a8d4f0"/></svg>
<span class="t" style="left:753px;top:559px;color:#ddd;font-size:9px">86°F</span>
<span class="t" style="left:780px;top:559px;color:#ddd;font-size:9px">Rain</span>
<svg style="left:808px;top:561px" width="9" height="6"><path d="M0 5.500L4.500 1L9 5.500" stroke="#ddd" fill="none"/></svg>
<svg style="left:826px;top:558px" width="8" height="14"><rect x="1.500" y="0" width="5" height="10" rx="2" fill="#ddd"/><path d="M0 12h8" stroke="#ddd"/></svg>
<svg style="left:843px;top:560px" width="12" height="10"><rect x="2" y="3" width="10" height="6" fill="#ddd"/><path d="M0 1l3 2M3 1l-1 3" stroke="#ddd"/></svg>
<div style="left:861px;top:559px;width:11px;height:11px;background:#f4e8e8"></div>
<span class="t" style="left:861px;top:558px;width:11px;text-align:center;color:#c8202c;font-size:10px;font-weight:700">V</span>
<svg style="left:880px;top:560px" width="10" height="10"><path d="M1 9a8 8 0 0 1 8-8M3 9a6 6 0 0 1 6-6M5 9a4 4 0 0 1 4-4" stroke="#aaa" fill="none"/></svg>
<svg style="left:897px;top:559px" width="13" height="11"><path d="M0 4h2l3-3v9L2 7H0z" stroke="#ddd" fill="none"/><path d="M7 3a3 3 0 0 1 0 5M9 1.500a5 5 0 0 1 0 8" stroke="#ddd" fill="none"/></svg>
<span class="t" style="left:916px;top:559px;color:#ddd;font-size:8px">ENG</span>
<span class="t" style="left:946px;top:559px;color:#ddd;font-size:8.300px">1:46 PM</span>
<svg style="left:993px;top:558px" width="13" height="13"><path d="M0 0h13v10H8l-2 3l-1-3H0z" fill="#eee"/><path d="M3 3h7M3 6h7" stroke="#4a4639"/></svg>
<div style="left:1020px;top:553px;width:1px;height:23px;background:#6a665a"></div>
</div></body></html>
